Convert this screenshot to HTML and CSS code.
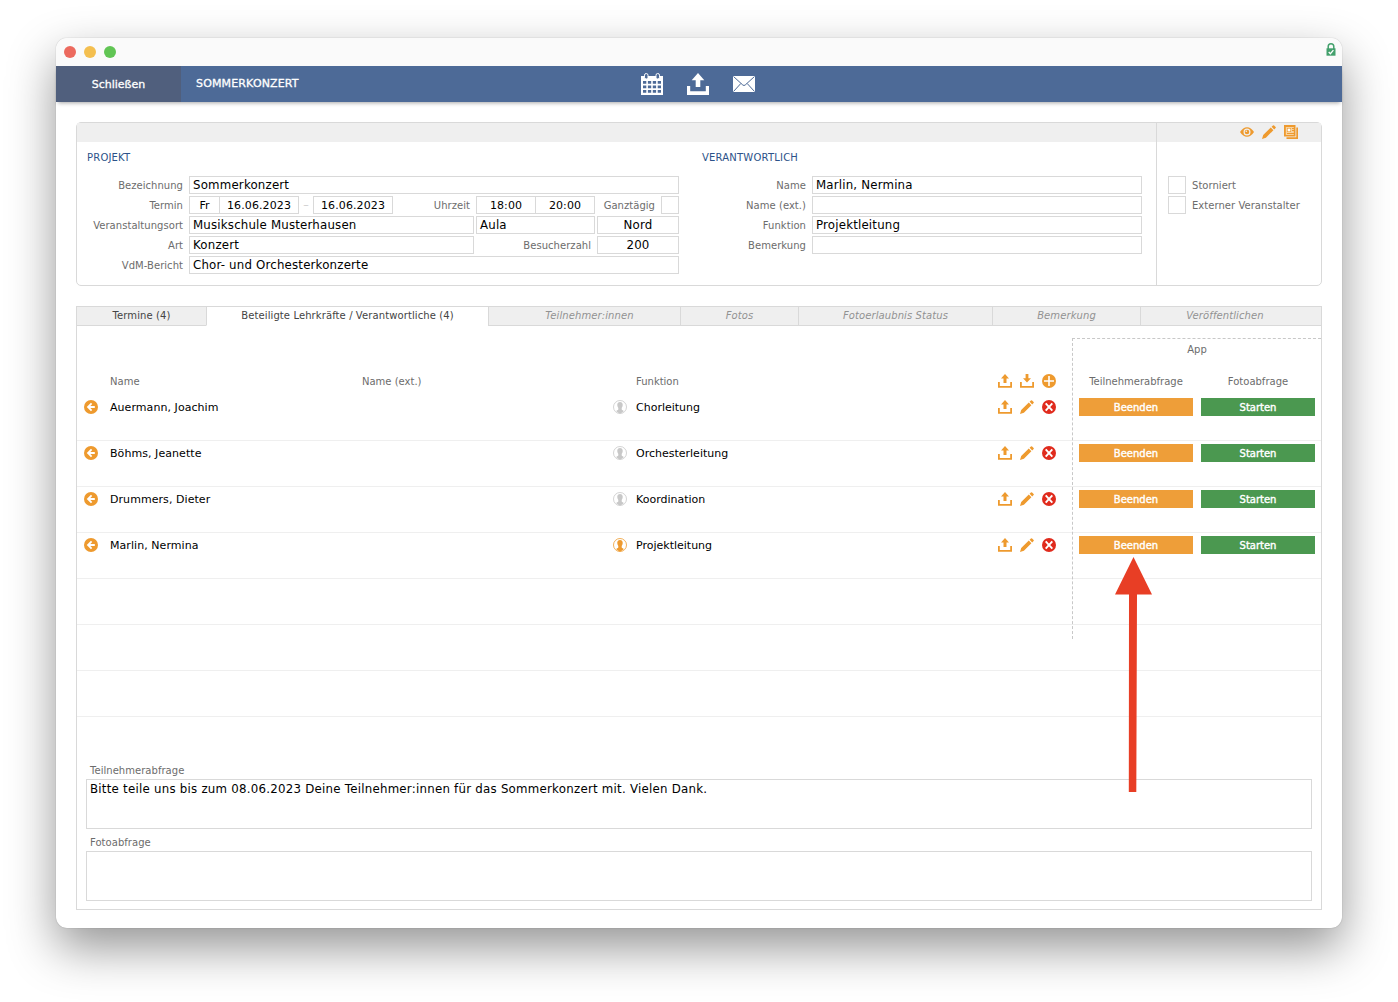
FILE: index.html
```html
<!DOCTYPE html>
<html lang="de">
<head>
<meta charset="utf-8">
<title>Sommerkonzert</title>
<link rel="stylesheet" href="styles.css">
</head>
<body>
<svg class="defs" width="0" height="0" aria-hidden="true">
  <symbol id="upload" viewBox="0 0 14 14"><path d="M7 0l4 4.600H8.500V9h-3V4.600H3zM0 8h1.800v3.900h10.400V8H14v5.800H0z"/></symbol>
  <symbol id="download" viewBox="0 0 14 14"><path d="M7 8.600L3 4.200h2.600V0h2.800v4.200H11zM0 8h1.800v3.900h10.400V8H14v5.800H0z"/></symbol>
  <symbol id="plus" viewBox="0 0 14 14"><circle cx="7" cy="7" r="7"/><path d="M7 2v10M2 7h10" stroke="#fff" stroke-width="1.600"/></symbol>
  <symbol id="delete" viewBox="0 0 14 14"><circle cx="7" cy="7" r="7"/><path d="M3.700 3.300l6.600 7.400M10.300 3.300l-6.600 7.400" stroke="#fff" stroke-width="1.900"/></symbol>
  <symbol id="pencil" viewBox="0 0 14 14"><path d="M0 14l1.200-3.900 7.600-7.500 2.600 2.600L3.900 12.800zM9.600 1.800L10.900.4q.6-.5 1.200 0L13.600 1.900q.5.600 0 1.200l-1.400 1.300z"/></symbol>
  <symbol id="back" viewBox="0 0 14 14"><circle cx="7" cy="7" r="7"/><path d="M7.600 3.300L4 7l3.600 3.700M4 7h6.800" fill="none" stroke="#fff" stroke-width="1.800"/></symbol>
  <symbol id="person" viewBox="0 0 14 14"><circle cx="7" cy="7" r="6.500" fill="#fff" stroke="currentColor" stroke-width=".8"/><path d="M7 1.900c2 0 2.900 1.400 2.700 3.200-.1 1.500-.5 2.200-1 2.900v1.500c.4.700 1.600.9 2.200 1.600A6 6 0 0 1 7 13.400 6 6 0 0 1 3.100 11.100c.6-.7 1.800-.9 2.200-1.600V8C4.800 7.300 4.400 6.600 4.300 5.100 4.100 3.300 5 1.900 7 1.900z"/></symbol>
</svg>

<main class="window">
  <div class="titlebar">
    <i class="light red"></i><i class="light yellow"></i><i class="light green"></i>
    <svg class="lock" width="10" height="13" viewBox="0 0 10 13"><path d="M2.200 6V3.600a2.800 2.800 0 0 1 5.600 0V6" fill="none" stroke="#43a06c" stroke-width="1.500"/><path d="M.5 5.300h9v7.400h-9z" fill="#43a06c"/><path d="M2.700 9l1.700 1.700 3-3.500" fill="none" stroke="#fff" stroke-width="1.300"/></svg>
  </div>
  <header class="bar">
    <div class="close">Schließen</div>
    <div class="heading">SOMMERKONZERT</div>
    <div class="tools">
      <svg width="24" height="24" viewBox="0 0 24 24"><path fill="#fff" d="M1 4h22v19H1z"/><path fill="#4d6a97" d="M3 9h3.300v2.800H3zM7.900 9h3.300v2.800H7.900zM12.800 9h3.300v2.800h-3.300zM17.700 9H21v2.800h-3.300zM3 13.400h3.300v2.800H3zM7.900 13.400h3.300v2.800H7.900zM12.800 13.400h3.300v2.800h-3.300zM17.700 13.400H21v2.800h-3.300zM3 17.900h3.300v2.800H3zM7.900 17.900h3.300v2.800H7.900zM12.800 17.900h3.300v2.800h-3.300zM17.700 17.900H21v2.800h-3.300z"/><rect x="4.500" y="1.500" width="3.500" height="5.500" rx="1.700" fill="#4d6a97" stroke="#fff"/><rect x="16" y="1.500" width="3.500" height="5.500" rx="1.700" fill="#4d6a97" stroke="#fff"/></svg>
      <svg width="24" height="24" viewBox="0 0 24 24" fill="#fff"><path d="M12 1l6.300 7.300h-4V15H9.700V8.300h-4zM1 14h3.200v5.300h15.600V14H23v9H1z"/></svg>
      <svg width="24" height="24" viewBox="0 0 24 24"><path fill="#fff" d="M1 4h22v16H1z"/><path d="M1.500 4.500L10.800 13q1.200 1 2.400 0l9.300-8.500M1.500 19.500l7.300-8M22.500 19.500l-7.300-8" fill="none" stroke="#4d6a97" stroke-width="1"/></svg>
    </div>
  </header>

  <section class="card">
    <div class="card-main">
      <div class="strip"></div>
      <div class="columns">
        <div class="project">
          <h2>PROJEKT</h2>
          <div class="line"><label>Bezeichnung</label><span class="field grow">Sommerkonzert</span></div>
          <div class="line"><label>Termin</label><span class="field day">Fr</span><span class="field date joined">16.06.2023</span><span class="dash">–</span><span class="field date">16.06.2023</span><label class="time-label">Uhrzeit</label><span class="field time">18:00</span><span class="field time joined">20:00</span><label class="all-day">Ganztägig</label><span class="field box"></span></div>
          <div class="line spaced"><label>Veranstaltungsort</label><span class="field grow">Musikschule Musterhausen</span><span class="field room">Aula</span><span class="field center">Nord</span></div>
          <div class="line spaced"><label>Art</label><span class="field grow">Konzert</span><label class="visitors">Besucherzahl</label><span class="field center">200</span></div>
          <div class="line"><label>VdM-Bericht</label><span class="field grow">Chor- und Orchesterkonzerte</span></div>
        </div>
        <div class="responsible">
          <h2>VERANTWORTLICH</h2>
          <div class="line"><label>Name</label><span class="field grow">Marlin, Nermina</span></div>
          <div class="line"><label>Name (ext.)</label><span class="field grow"></span></div>
          <div class="line"><label>Funktion</label><span class="field grow">Projektleitung</span></div>
          <div class="line"><label>Bemerkung</label><span class="field grow"></span></div>
        </div>
      </div>
    </div>
    <div class="card-side">
      <div class="strip actions">
        <svg width="14" height="14" viewBox="0 0 14 14"><path d="M0 7q3-4.700 7-4.700T14 7q-3 4.700-7 4.700T0 7z"/><circle cx="7" cy="7" r="2.900" fill="none" stroke="#efefef" stroke-width="1.200"/><circle cx="6.300" cy="6.200" r=".8" fill="#efefef"/></svg>
        <svg width="14" height="14"><use href="#pencil"/></svg>
        <svg width="14" height="14" viewBox="0 0 14 14"><path d="M0 0h11.500v11.500H0z"/><path d="M12.300 2.500H14V14H2.500v-1.700h9.800z"/><path d="M1.800 2h8v8h-8z" fill="#f8d39f"/><path d="M3 3h4v4H3zM8 3h2v1H8zM8 5h2v1H8zM3 8h7v1H3z"/><path d="M3.600 3.600h2.800v2.800H3.600z" fill="#fff"/></svg>
      </div>
      <div class="checks">
        <div class="line"><span class="field box"></span><span class="check-label">Storniert</span></div>
        <div class="line"><span class="field box"></span><span class="check-label">Externer Veranstalter</span></div>
      </div>
    </div>
  </section>

  <nav class="tabs">
    <span class="tab">Termine (4)</span><span class="tab active">Beteiligte Lehrkräfte / Verantwortliche (4)</span><span class="tab off pupils">Teilnehmer:innen</span><span class="tab off">Fotos</span><span class="tab off">Fotoerlaubnis Status</span><span class="tab off">Bemerkung</span><span class="tab off publish">Veröffentlichen</span>
  </nav>
  <section class="sheet">
    <div class="app-box">App</div>
    <div class="row head"><span></span><span>Name</span><span>Name (ext.)</span><span></span><span>Funktion</span>
      <span class="icons"><svg><use href="#upload"/></svg><svg><use href="#download"/></svg><svg><use href="#plus"/></svg></span><span class="mid">Teilnehmerabfrage</span><span class="mid">Fotoabfrage</span></div>
    <div class="row"><svg><use href="#back"/></svg><span>Auermann, Joachim</span><span></span><svg class="gray"><use href="#person"/></svg><span>Chorleitung</span>
      <span class="icons"><svg><use href="#upload"/></svg><svg><use href="#pencil"/></svg><svg class="del"><use href="#delete"/></svg></span><b class="stop">Beenden</b><b class="start">Starten</b></div>
    <div class="row"><svg><use href="#back"/></svg><span>Böhms, Jeanette</span><span></span><svg class="gray"><use href="#person"/></svg><span>Orchesterleitung</span>
      <span class="icons"><svg><use href="#upload"/></svg><svg><use href="#pencil"/></svg><svg class="del"><use href="#delete"/></svg></span><b class="stop">Beenden</b><b class="start">Starten</b></div>
    <div class="row"><svg><use href="#back"/></svg><span>Drummers, Dieter</span><span></span><svg class="gray"><use href="#person"/></svg><span>Koordination</span>
      <span class="icons"><svg><use href="#upload"/></svg><svg><use href="#pencil"/></svg><svg class="del"><use href="#delete"/></svg></span><b class="stop">Beenden</b><b class="start">Starten</b></div>
    <div class="row"><svg><use href="#back"/></svg><span>Marlin, Nermina</span><span></span><svg><use href="#person"/></svg><span>Projektleitung</span>
      <span class="icons"><svg><use href="#upload"/></svg><svg><use href="#pencil"/></svg><svg class="del"><use href="#delete"/></svg></span><b class="stop">Beenden</b><b class="start">Starten</b></div>
    <div class="row"></div>
    <div class="row"></div>
    <div class="row"></div>
    <div class="notes">
      <label>Teilnehmerabfrage</label>
      <div class="note">Bitte teile uns bis zum 08.06.2023 Deine Teilnehmer:innen für das Sommerkonzert mit. Vielen Dank.</div>
      <label>Fotoabfrage</label>
      <div class="note"></div>
    </div>
  </section>
</main>
<svg class="arrow" width="38" height="236" viewBox="0 0 38 236"><path d="M19.500 0L38 37.500H23L22.300 235H14.800L15 37.500H1z"/></svg>
</body>
</html>
```
FILE: styles.css
```css
* { box-sizing: border-box; }
body {
  margin: 0;
  padding: 38px 56px;
  width: 1398px;
  height: 1002px;
  overflow: hidden;
  position: relative;
  background: #fff;
  color: #000;
  font: 11px/18px Verdana, "DejaVu Sans", sans-serif;
}
svg { fill: currentColor; flex: none; display: block; }
.defs { position: absolute; }
.window {
  height: 890px;
  border-radius: 11px;
  background: #fff;
  box-shadow: 0 0 1px rgba(0,0,0,.4), 0 20px 48px rgba(0,0,0,.42);
}
.titlebar {
  display: flex;
  align-items: center;
  gap: 8px;
  height: 28px;
  padding: 0 6px 0 8px;
  border-radius: 11px 11px 0 0;
  background: #fafafa;
}
.light { width: 12px; height: 12px; border-radius: 50%; }
.red { background: #ec6a5e; }
.yellow { background: #f4bf4f; }
.green { background: #61c554; }
.lock { margin: -6px 0 0 auto; }

.bar {
  display: grid;
  grid-template-columns: 125px 459px 1fr;
  align-items: center;
  height: 36px;
  background: #4d6a97;
  color: #fff;
  box-shadow: 0 3px 4px -2px rgba(0,0,0,.35);
  -webkit-text-stroke: .3px #fff;
}
.close { height: 36px; line-height: 37px; text-align: center; background: #505f7d; }
.heading { padding-left: 15px; line-height: 20px; letter-spacing: .15px; }
.tools { display: flex; gap: 22px; }

.card {
  display: flex;
  height: 164px;
  margin: 20px 20px 0;
  border: 1px solid #d9d9d9;
  border-radius: 5px;
}
.card-main { width: 1079px; }
.card-side { flex: 1; border-left: 1px solid #d9d9d9; color: #ee9a2e; }
.strip { height: 19px; background: #efefef; }
.actions { display: flex; justify-content: flex-end; align-items: center; gap: 8px; padding: 0 23px 2px 0; }
.columns { display: flex; }
.project { width: 602px; padding-left: 10px; }
.responsible { width: 463px; padding-left: 23px; }
h2 { margin: 7px 0 9px; font-size: 10px; font-weight: 400; line-height: 18px; letter-spacing: .2px; color: #2c5289; }
.line { display: flex; height: 18px; margin-bottom: 2px; }
label, .check-label { color: #6c6c6c; font-size: 10px; line-height: 20px; letter-spacing: .04px; }
.line label { width: 102px; padding-right: 6px; text-align: right; white-space: nowrap; }
.responsible .line label { width: 110px; }
.field {
  height: 18px;
  padding-left: 3px;
  border: 1px solid #d9d9d9;
  font-size: 11.800px;
  line-height: 17px;
  letter-spacing: .18px;
  white-space: nowrap;
}
.grow { flex: 1; }
.day { width: 31px; }
.date { width: 80px; }
.day, .date, .time, .center { padding: 0; text-align: center; }
.day, .date, .time { font-size: 11px; line-height: 18px; letter-spacing: .1px; }
.joined { margin-left: -1px; }
.dash { width: 14px; text-align: center; color: #ccc; }
.line .time-label { width: 83px; }
.time { width: 60px; }
.line .all-day { width: 66px; }
.box { width: 18px; padding: 0; }
.spaced { gap: 2px; }
.spaced label:first-child { margin-right: -2px; }
.room { width: 119px; }
.center { width: 82px; }
.line .visitors { width: 119px; padding-right: 4px; }
.checks { padding: 34px 0 0 11px; }
.check-label { padding-left: 6px; }

.tabs {
  display: grid;
  grid-template-columns: 130px 282px 192px 118px 194px 148px 182px;
  height: 20px;
  margin: 20px 20px 0;
  color: #444;
  font-size: 10px;
  letter-spacing: .1px;
  text-align: center;
}
.tab { border: solid #d9d9d9; border-width: 1px 0 1px 1px; background: #efefef; }
.tab:last-child { border-right-width: 1px; }
.active { background: #fff; border-bottom-color: #fff; }
.off { color: #929292; font-style: italic; }
.pupils { padding-left: 10px; }
.publish { padding-right: 12px; }

.sheet {
  position: relative;
  height: 584px;
  margin: 0 20px;
  border: 1px solid #d9d9d9;
  border-top: 0;
}
.row {
  display: grid;
  grid-template-columns: 33px 252px 250px 24px 361px 82px 114px 114px;
  height: 46px;
  padding-top: 3px;
  border-bottom: 1px solid #efefef;
  line-height: 20px;
}
.row > * { height: 18px; }
.row > :nth-child(8) { margin-left: 8px; width: 114px; }
.row svg { width: 14px; height: 14px; margin: 2px 0 0 7px; color: #ee9a2e; }
.row > svg:nth-child(4) { margin-left: 1px; }
.row .gray { color: #c8c8c8; }
.row > span:nth-child(2) { letter-spacing: .06px; }
.icons { display: flex; gap: 8px; padding-left: 1px; }
.row .icons svg { margin-left: 0; }
.row .del { color: #e02b1d; }
.head { height: 69px; padding-top: 46px; border: 0; color: #6c6c6c; font-size: 10px; }
.mid { text-align: center; }
.stop, .start { color: #fff; font-size: 10px; font-weight: 400; text-align: center; -webkit-text-stroke: .4px #fff; }
.stop { background: #ee9e39; }
.start { background: #4b9850; }
.app-box {
  position: absolute;
  top: 12px;
  right: 0;
  width: 249px;
  height: 301px;
  padding-top: 2px;
  border: dashed #c8c8c8;
  border-width: 1px 0 0 1px;
  color: #6c6c6c;
  font-size: 10px;
  text-align: center;
}
.notes { padding: 44px 9px 0; }
.notes label { display: block; height: 18px; padding-left: 4px; }
.note {
  height: 50px;
  margin-bottom: 4px;
  padding-left: 3px;
  border: 1px solid #d9d9d9;
  font-size: 11.800px;
  letter-spacing: .24px;
}
.arrow { position: absolute; left: 1114px; top: 557px; color: #e83e25; }
```
